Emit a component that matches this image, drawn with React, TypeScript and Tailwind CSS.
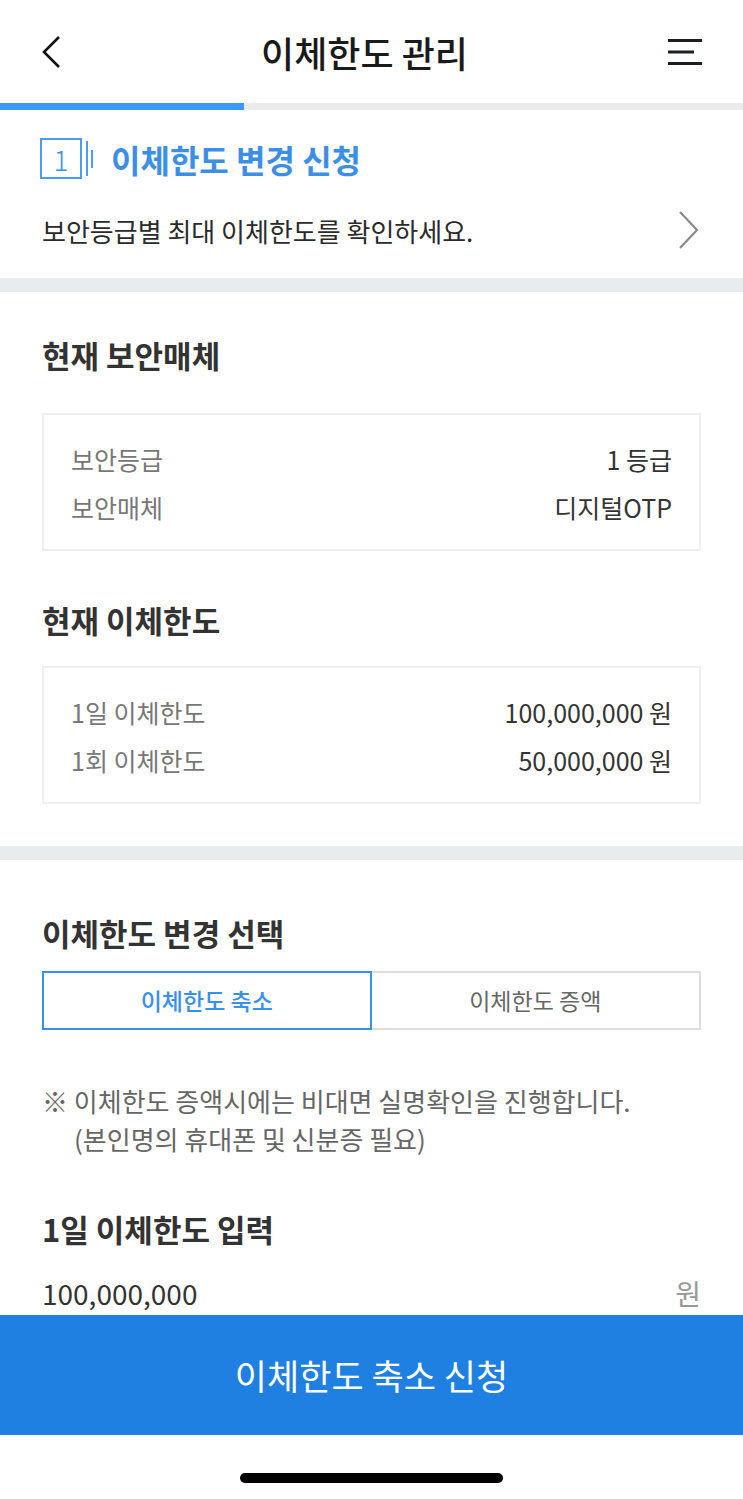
const font = { fontFamily: '"Noto Sans CJK KR", "Noto Sans", sans-serif' };

const InfoCard = ({ rows }: { rows: [string, string][] }) => (
    <div className="border-2 border-[#efefef] px-[27px] pt-[20px] pb-[18px]">
        {rows.map(([label, value]) => (
            <div key={label} className="flex items-center justify-between leading-[48px]">
                <span className="text-[25px] text-[#777777]">{label}</span>
                <span className="text-[25px] text-[#333333]">{value}</span>
            </div>
        ))}
    </div>
);

const App = () => {
    return (
        <div className="h-[1499px] w-[743px] bg-white flex flex-col overflow-hidden" style={font}>
            {/* header */}
            <div className="h-[103px] flex items-center justify-between px-[40px] shrink-0">
                <svg width="22" height="34" viewBox="0 0 22 34" fill="none">
                    <path d="M19 2 L4 17 L19 32" stroke="#111" strokeWidth="2.6" />
                </svg>
                <h1 className="text-[36px] font-medium text-[#1a1a1a]">이체한도 관리</h1>
                <svg width="36" height="28" viewBox="0 0 36 28" fill="none">
                    <path d="M1 2.5 H35 M1 14 H27 M1 25.5 H35" stroke="#1b1f24" strokeWidth="3" />
                </svg>
            </div>

            {/* progress */}
            <div className="h-[7px] bg-[#ebebeb] shrink-0">
                <div className="h-full w-[244px] bg-[#3b98f5]" />
            </div>

            {/* step */}
            <div className="px-[40px] pt-[28px] pb-[28px] shrink-0">
                <div className="flex items-center h-[41px]">
                    <div className="w-[42px] h-[41px] border-2 border-[#4a9df0] flex items-center justify-center text-[28px] font-light text-[#3d8fe6]">
                        1
                    </div>
                    <div className="ml-[4px] w-[2px] h-[35px] bg-[#4a9df0]" />
                    <div className="ml-[3px] w-[2px] h-[18px] bg-[#4a9df0]" />
                    <span className="ml-[18px] text-[32px] font-semibold text-[#3d8fe6]">
                        이체한도 변경 신청
                    </span>
                </div>
                <div className="mt-[31px] h-[40px] flex items-center justify-between">
                    <span className="ml-[2px] text-[26px] text-[#2a2a2a]">보안등급별 최대 이체한도를 확인하세요.</span>
                    <svg width="24" height="40" viewBox="0 0 24 40" fill="none" className="mr-[2px]">
                        <path d="M3 2 L20 20 L3 38" stroke="#8a8a8a" strokeWidth="2.2" />
                    </svg>
                </div>
            </div>

            <div className="h-[14px] bg-[#e9ecef] shrink-0" />

            {/* current */}
            <div className="px-[42px] pt-[43px] pb-[42px] shrink-0">
                <h2 className="text-[31px] leading-[40px] font-bold text-[#333333]">현재 보안매체</h2>
                <div className="mt-[38px]">
                    <InfoCard rows={[['보안등급', '1 등급'], ['보안매체', '디지털OTP']]} />
                </div>
                <h2 className="mt-[49px] text-[31px] leading-[40px] font-bold text-[#333333]">현재 이체한도</h2>
                <div className="mt-[26px]">
                    <InfoCard rows={[['1일 이체한도', '100,000,000 원'], ['1회 이체한도', '50,000,000 원']]} />
                </div>
            </div>

            <div className="h-[14px] bg-[#e9ecef] shrink-0" />

            {/* change */}
            <div className="flex-1 min-h-0 overflow-hidden px-[42px] pt-[53px]">
                <h2 className="text-[31px] leading-[40px] font-bold text-[#333333]">이체한도 변경 선택</h2>
                <div className="mt-[18px] grid grid-cols-2 h-[59px]">
                    <button className="border-2 border-[#3a8fe8] text-[23px] font-medium text-[#3a8fe8]">이체한도 축소</button>
                    <button className="border-y-2 border-r-2 border-[#dddddd] text-[23px] text-[#666666]">이체한도 증액</button>
                </div>
                <div className="mt-[52px] text-[26px] leading-[38px] text-[#666666]">
                    <p>※ 이체한도 증액시에는 비대면 실명확인을 진행합니다.</p>
                    <p className="pl-[32px]">(본인명의 휴대폰 및 신분증 필요)</p>
                </div>
                <h2 className="mt-[51px] text-[31px] leading-[40px] font-bold text-[#333333]">1일 이체한도 입력</h2>
                <div className="mt-[24px] flex items-center justify-between leading-[40px]">
                    <span className="text-[28px] text-[#333333]">100,000,000</span>
                    <span className="text-[28px] text-[#999999]">원</span>
                </div>
            </div>

            {/* submit */}
            <button className="h-[120px] bg-[#2080e2] text-white text-[35px] shrink-0">
                이체한도 축소 신청
            </button>

            <div className="h-[64px] flex justify-center pt-[38px] shrink-0">
                <div className="w-[263px] h-[10px] rounded-full bg-black" />
            </div>
        </div>
    );
};

export default App;
